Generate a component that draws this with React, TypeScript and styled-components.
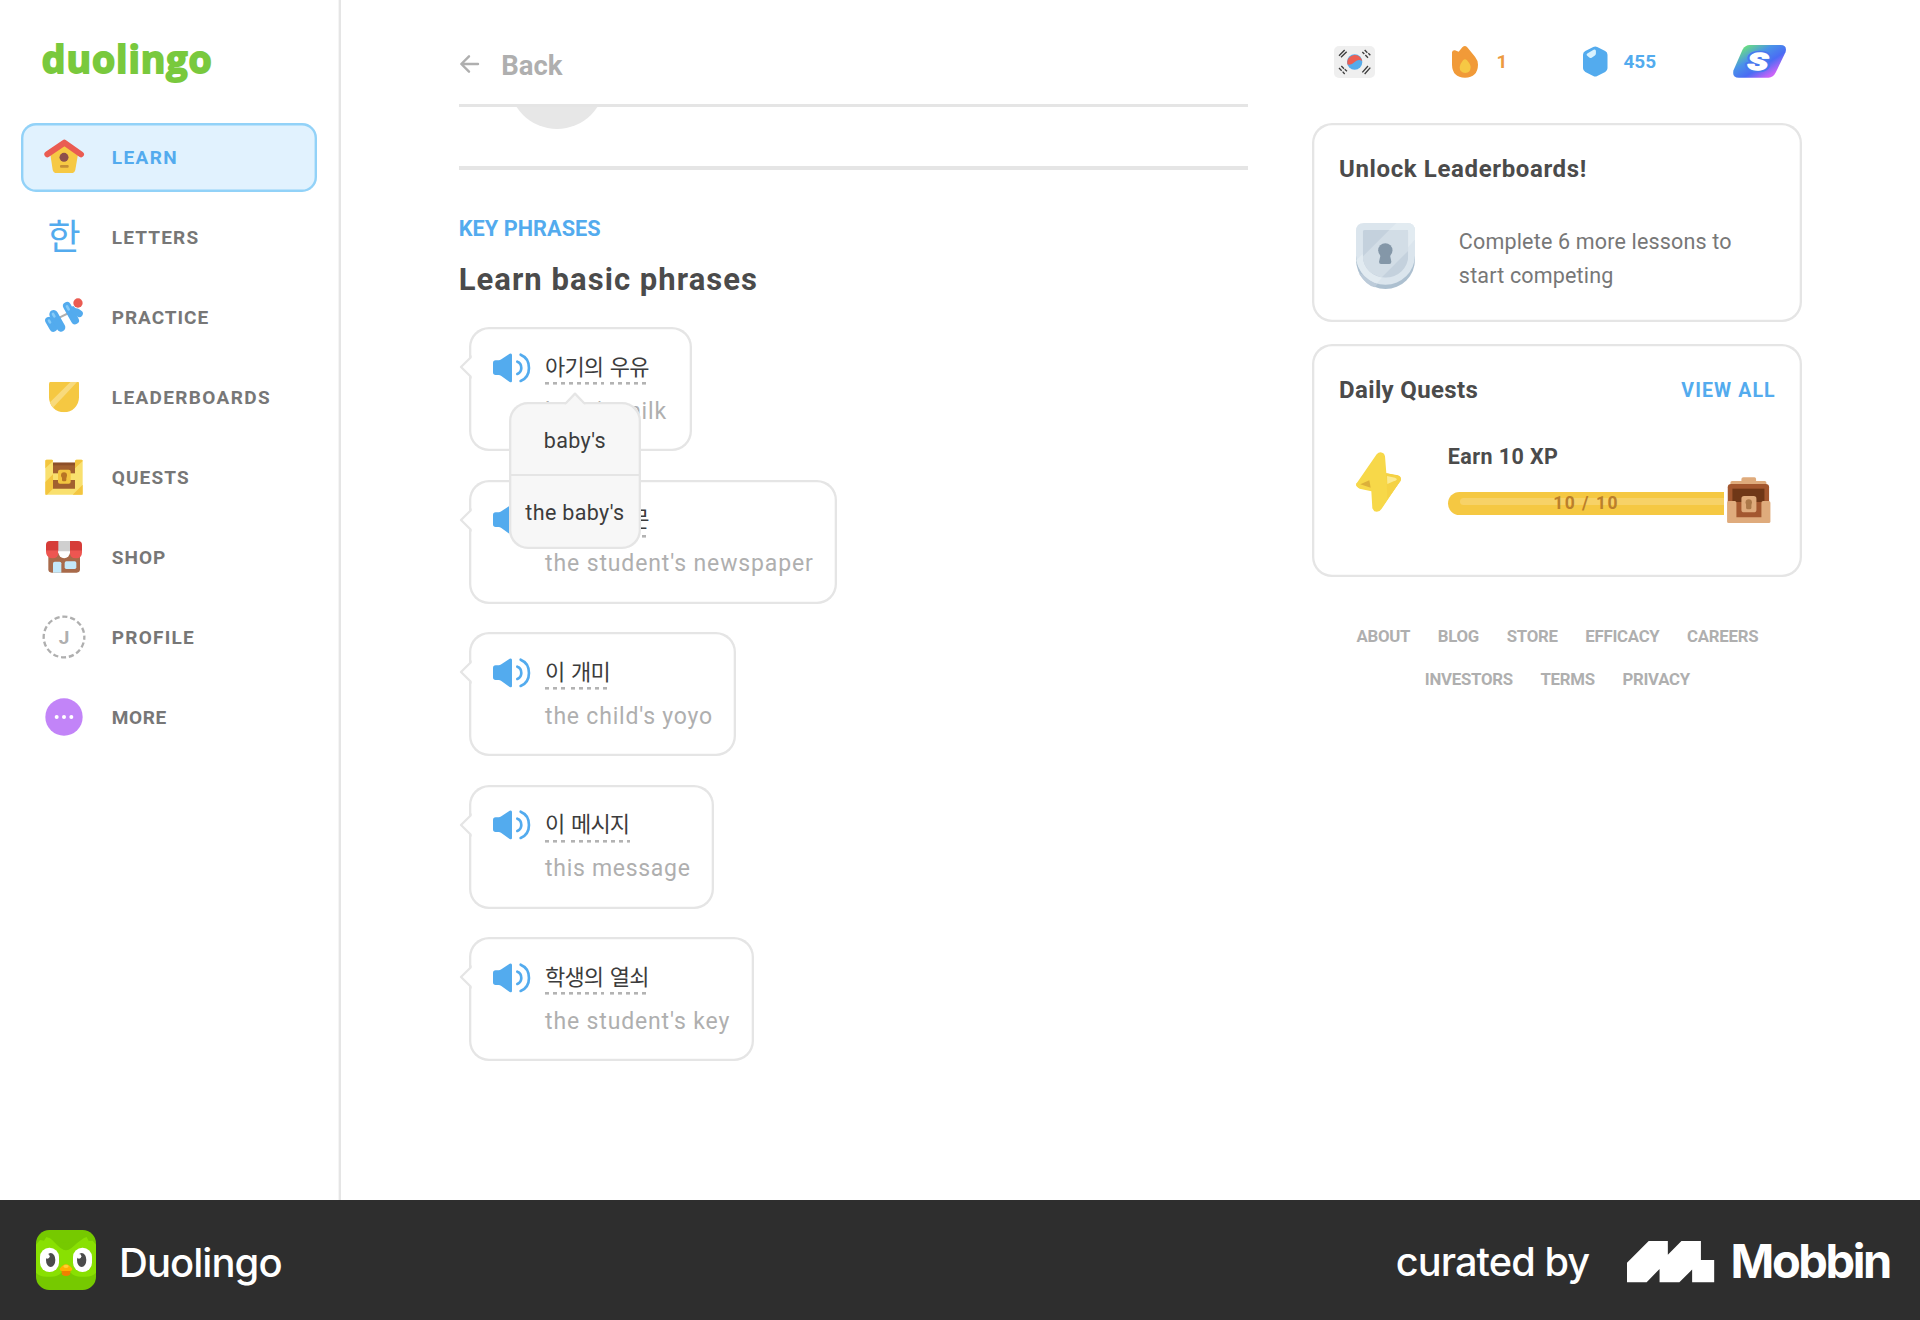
import React from "react";
import styled, { createGlobalStyle } from "styled-components";

const c = {
  blue: "#53abee",
  gray: "#777777",
  light: "#afafaf",
  line: "#e5e5e5",
  dark: "#4b4b4b",
  green: "#79c93d",
};

const Global = createGlobalStyle`
  * { box-sizing: border-box; }
  body { margin: 0; background: #fff; font-family: Roboto, "Noto Sans CJK KR", sans-serif; }
  svg { display: block; flex: none; overflow: visible; }
`;

const Page = styled.div`
  width: 1920px;
  height: 1320px;
  display: flex;
  flex-direction: column;
  overflow: hidden;
`;
const Screen = styled.div`
  height: 1200px;
  display: flex;
`;

/* Sidebar */
const Sidebar = styled.aside`
  width: 341.4px;
  padding: 34px 22px 0 21.3px;
  box-shadow: inset -2.4px 0 0 ${c.line};
`;
const Logo = styled.div`
  height: 88.7px;
  padding-left: 20.5px;
  font: 700 37.5px/50px "Open Sans", sans-serif;
  letter-spacing: 0.9px;
  color: ${c.green};
  -webkit-text-stroke: 1.8px ${c.green};
  stroke-linejoin: round;
  white-space: nowrap;
`;
const Nav = styled.nav`
  display: flex;
  flex-direction: column;
  gap: 10.9px;
`;
const NavItem = styled.a<{ $active?: boolean; $ls: number }>`
  width: 295.7px;
  height: 69.1px;
  padding-left: 20.5px;
  display: flex;
  align-items: center;
  gap: 26px;
  border-radius: 15px;
  background: ${(p) => (p.$active ? "#e1f2fe" : "transparent")};
  box-shadow: ${(p) => (p.$active ? "inset 0 0 0 2.4px #92d2f8" : "none")};
  color: ${(p) => (p.$active ? c.blue : c.gray)};
  font-size: 19px;
  font-weight: 700;
  letter-spacing: ${(p) => p.$ls}px;
`;

/* Lesson column */
const Main = styled.main`
  width: 789px;
  margin-left: 117.3px;
`;
const Back = styled.div`
  height: 104px;
  padding: 26px 0 0 1.5px;
  display: flex;
  align-items: center;
  gap: 22px;
  color: ${c.light};
  font-size: 27.5px;
  font-weight: 700;
`;
const BackArrow = styled.svg`
  margin-bottom: 3px;
`;
const Rule = styled.div<{ $h: number }>`
  height: ${(p) => p.$h}px;
  background: ${c.line};
`;
const Clip = styled.div`
  height: 59.6px;
  padding-left: 50.6px;
  overflow: hidden;
`;
const Disc = styled.div`
  width: 96px;
  height: 96px;
  margin-top: -73.6px;
  border-radius: 50%;
  background: #e7e7e7;
`;
const Eyebrow = styled.div`
  margin-top: 44.8px;
  font-size: 21.7px;
  line-height: 28px;
  font-weight: 700;
  letter-spacing: 0.05px;
  color: ${c.blue};
`;
const Title = styled.h1`
  margin: 17.9px 0 26.9px;
  font-size: 31px;
  line-height: 40px;
  font-weight: 700;
  letter-spacing: 1.05px;
  color: ${c.dark};
`;
const Bubbles = styled.div`
  padding-left: 10.8px;
  display: flex;
  flex-direction: column;
  gap: 28.8px;
`;
const Bubble = styled.div<{ $w: number }>`
  position: relative;
  width: ${(p) => p.$w}px;
  height: 123.7px;
  padding: 24.3px 0 0 24px;
  display: flex;
  align-items: flex-start;
  gap: 14.3px;
  border-radius: 20px;
  box-shadow: inset 0 0 0 2.3px ${c.line};
`;
const Tail = styled.svg`
  position: absolute;
  left: -10.5px;
  top: 28px;
`;
const Words = styled.div`
  display: flex;
  gap: 6px;
  font: 400 22px/26px "Noto Sans CJK KR", sans-serif;
  letter-spacing: -0.85px;
  color: #3c3c3c;
`;
const Word = styled.span<{ $w: number }>`
  width: ${(p) => p.$w}px;
  height: 33.4px;
  white-space: nowrap;
  background: repeating-linear-gradient(90deg, #b3b3b3 0 4px, transparent 4px 8px) left bottom / 100% 2.6px no-repeat;
`;
const Meaning = styled.div<{ $ls: number }>`
  margin-top: 12.9px;
  font-size: 23px;
  line-height: 28px;
  letter-spacing: ${(p) => p.$ls}px;
  color: ${c.light};
  white-space: nowrap;
`;
const Hint = styled.div`
  position: absolute;
  z-index: 2;
  left: 39.8px;
  top: 75px;
  width: 131.3px;
  height: 146.4px;
  display: flex;
  flex-direction: column;
  border-radius: 19px;
  background: #f7f7f7;
  box-shadow: inset 0 0 0 2.3px ${c.line};
`;
const HintArrow = styled.svg`
  position: absolute;
  left: 54.5px;
  top: -10.5px;
`;
const HintRow = styled.div`
  height: 72px;
  padding-top: 4px;
  display: flex;
  align-items: center;
  justify-content: center;
  font-size: 21.5px;
  letter-spacing: 0.35px;
  color: #3c3c3c;
  & + & {
    height: 74.4px;
    padding-top: 0;
    border-top: 2px solid ${c.line};
  }
`;

/* Right column */
const Aside = styled.aside`
  width: 490px;
  margin-left: 64.7px;
`;
const Stats = styled.div`
  height: 122.8px;
  padding: 45px 16px 0 21.5px;
  display: flex;
  justify-content: space-between;
  align-items: flex-start;
`;
const Stat = styled.div<{ $color: string; $gap: number; $w: number }>`
  width: ${(p) => p.$w}px;
  height: 33px;
  display: flex;
  align-items: center;
  gap: ${(p) => p.$gap}px;
  color: ${(p) => p.$color};
  font-size: 19px;
  font-weight: 700;
`;
const Card = styled.section<{ $h: number }>`
  height: ${(p) => p.$h}px;
  margin-bottom: 21.6px;
  padding: 31px 26.7px 0;
  border-radius: 20px;
  box-shadow: inset 0 0 0 2.3px ${c.line};
`;
const CardHead = styled.div`
  display: flex;
  justify-content: space-between;
  align-items: center;
  height: 30px;
`;
const CardTitle = styled.h2<{ $ls: number }>`
  margin: 0;
  font-size: 24px;
  font-weight: 700;
  letter-spacing: ${(p) => p.$ls}px;
  color: ${c.dark};
`;
const ViewAll = styled.a`
  font-size: 19.5px;
  font-weight: 700;
  letter-spacing: 1.1px;
  color: ${c.blue};
`;
const LockRow = styled.div`
  margin-top: 39.5px;
  padding-left: 16.5px;
  display: flex;
  gap: 44.3px;
`;
const LockText = styled.p`
  margin: 2px 0 0;
  font-size: 21.5px;
  line-height: 33.4px;
  letter-spacing: 0.17px;
  color: ${c.gray};
  white-space: nowrap;
`;
const QuestRow = styled.div`
  margin-top: 47.4px;
  padding-left: 16.5px;
  display: flex;
  gap: 47.3px;
`;
const QuestBody = styled.div`
  display: flex;
  flex-direction: column;
`;
const QuestName = styled.div`
  margin-top: -9.8px;
  font-size: 21.5px;
  line-height: 28px;
  font-weight: 700;
  letter-spacing: 0.4px;
  color: ${c.dark};
`;
const Progress = styled.div`
  display: flex;
  align-items: flex-end;
  gap: 2.7px;
  margin-top: 6.3px;
`;
const Bar = styled.div`
  width: 276px;
  height: 23.7px;
  margin-bottom: 7.7px;
  padding: 6.5px 0 0 12px;
  border-radius: 12px 0 0 12px;
  background: #f5c842;
`;
const Shine = styled.div`
  height: 7px;
  display: flex;
  align-items: center;
  justify-content: center;
  padding-right: 11.5px;
  border-radius: 4px 0 0 4px;
  background: #f7d267;
  font-size: 17.5px;
  font-weight: 700;
  line-height: 7px;
  letter-spacing: 1.5px;
  color: #bb7f2a;
`;
const BarText = styled.span`
  padding-top: 4px;
`;
const Links = styled.div`
  margin-top: 48.5px;
  display: flex;
  flex-direction: column;
  gap: 22.7px;
`;
const LinkRow = styled.div`
  display: flex;
  justify-content: center;
  gap: 27.6px;
  font-size: 16.8px;
  line-height: 20px;
  font-weight: 700;
  letter-spacing: -0.25px;
  color: ${c.light};
`;

/* Footer */
const Footer = styled.footer`
  height: 120px;
  padding: 0 26px 0 36px;
  display: flex;
  align-items: center;
  background: #2e2e2e;
  color: #fff;
  font-family: Inter, sans-serif;
`;
const AppName = styled.div`
  margin: 4px auto 0 23px;
  font-size: 40px;
  font-weight: 500;
  letter-spacing: -0.95px;
`;
const Curated = styled.div`
  margin: 3px 37.5px 0 0;
  font-size: 39.7px;
  font-weight: 500;
  letter-spacing: -0.9px;
`;
const MobbinMark = styled.svg`
  margin-top: 4px;
`;
const Mobbin = styled.div`
  width: 163.5px;
  margin: 1px 0 0 16.5px;
  font-size: 47px;
  font-weight: 700;
  letter-spacing: -2.4px;
`;

const NavSvg = ({ cy, children }: { cy: number; children: React.ReactNode }) => (
  <svg width="44" height="44" viewBox={`126 ${cy - 66} 132 132`}>{children}</svg>
);

const House = () => (
  <NavSvg cy={412}>
    <path d="M150 398 L192 372 L235 398 L226 450 Q224 460 214 460 H170 Q160 460 158 450 Z" fill="#f6c944" />
    <path d="M142 404 L193 369 L243 404" fill="none" stroke="#ea5c52" strokeWidth="18" strokeLinecap="round" strokeLinejoin="round" />
    <circle cx="192" cy="413" r="13.5" fill="#8c4f4b" />
    <rect x="180" y="436" width="26" height="8" rx="3" fill="#c58f35" />
  </NavSvg>
);
const Hangul = () => (
  <NavSvg cy={652}>
    <text x="192" y="691" textAnchor="middle" fontFamily="Noto Sans CJK KR" fontSize="108" fontWeight="400" letterSpacing="0" fill={c.blue}>한</text>
  </NavSvg>
);
const Dumbbell = () => (
  <NavSvg cy={892}>
    <path d="M178 894 L206 880" stroke="#afafaf" strokeWidth="6" />
    <g stroke={c.blue} strokeLinecap="round" fill="none">
      <path d="M147 903 L160 925" strokeWidth="23" />
      <path d="M161 884 L183 923" strokeWidth="26" />
      <path d="M201 859 L225 902" strokeWidth="24" />
      <path d="M221 870 L238 882" strokeWidth="21" />
    </g>
    <g stroke="#86cbf8" strokeWidth="8" strokeLinecap="round">
      <path d="M147 903 L150 908" />
      <path d="M159 883 L163 890" />
      <path d="M201 860 L206 869" />
    </g>
    <circle cx="234" cy="850" r="16.5" fill="#fff" />
    <circle cx="234" cy="850" r="14" fill="#ea5c52" />
  </NavSvg>
);
const Shield = () => (
  <NavSvg cy={112}>
    <clipPath id="gold"><path d="M147 72 Q147 66 153 66 H231 Q237 66 237 72 V113 A45 45 0 0 1 147 113 Z" /></clipPath>
    <g clipPath="url(#gold)">
      <rect x="147" y="66" width="90" height="94" fill="#f5c842" />
      <path d="M146 132 L212 66 H237 V72 L162 148 Z" fill="#f8da7c" />
      <path d="M232 66 H237 V78 L166 149 L160 143 Z" fill="#f5c842" />
    </g>
  </NavSvg>
);
const Chest = () => (
  <NavSvg cy={352}>
    <rect x="150" y="309" width="84" height="84" fill="#a2602f" />
    <path d="M159 313 H225" stroke="#8d4f28" strokeWidth="8" />
    <path d="M136 304 Q136 300 140 300 H155 Q159 300 159 304 V387 H225 V304 Q225 300 229 300 H244 Q248 300 248 304 V401 Q248 405 244 405 H140 Q136 405 136 401 Z" fill="#f9e06e" />
    <path d="M140 300 H155 Q159 300 159 304 L136 326 V304 Q136 300 140 300 Z M136 367 L159 344 V387 L141 405 H136 Z M229 300 H244 Q248 300 248 304 L225 326 V304 Z M248 375 V405 H218 Z" fill="#f3c53f" />
    <path d="M159 341 H225 V361 H159 Z" fill="#f9e06e" />
    <rect x="174" y="330" width="38" height="42" rx="6" fill="#f3c53f" />
    <circle cx="192" cy="347" r="9" fill="#b87524" />
    <rect x="186" y="349" width="13" height="16" rx="4" fill="#b87524" />
  </NavSvg>
);
const Shop = () => (
  <NavSvg cy={592}>
    <path d="M145 580 H240 V629 Q240 639 230 639 H155 Q145 639 145 629 Z" fill="#a86a4a" />
    <path d="M138 572 H175 V580 Q175 596 157 596 Q138 594 138 576 Z M210 572 H246 V578 Q246 596 228 596 Q210 596 210 580 Z" fill="#ee5651" />
    <path d="M138 573 V556 Q138 544 150 544 H234 Q246 544 246 556 V573 Z" fill="#d63c38" />
    <rect x="175" y="544" width="35" height="34" fill="#cfcfcf" />
    <path d="M175 575 H210 V578 A17.5 17.5 0 0 1 175 578 Z" fill="#fff" />
    <path d="M159 639 V611 Q159 606 164 606 H179 Q184 606 184 611 V639 Z" fill="#c4e9fa" />
    <rect x="194" y="605" width="35" height="23" rx="5" fill="#c4e9fa" />
  </NavSvg>
);
const Profile = () => (
  <NavSvg cy={832}>
    <circle cx="192" cy="832" r="61" fill="none" stroke="#afafaf" strokeWidth="7" strokeDasharray="15.5 8.46" strokeDashoffset="7" />
    <text x="192" y="852" textAnchor="middle" fontSize="57" fontWeight="700" letterSpacing="0" fill="#afafaf">J</text>
  </NavSvg>
);
const More = () => (
  <NavSvg cy={1072}>
    <circle cx="192" cy="1072" r="56" fill="#c284f8" />
    <g fill="#fff"><circle cx="170" cy="1072" r="6" /><circle cx="192" cy="1072" r="6" /><circle cx="214" cy="1072" r="6" /></g>
  </NavSvg>
);

const SpeakerSvg = styled.svg`
  margin-top: 1px;
`;
const Speaker = () => (
  <SpeakerSvg width="37.3" height="30" viewBox="161 126 112 90">
    <path d="M161 156 Q161 148 169 148 H178 Q182 148 186 145 L211 128 Q218 125 218 132 V210 Q218 216 211 213 L186 195 Q182 192 178 192 H169 Q161 192 161 184 Z" fill={c.blue} />
    <g fill="none" stroke={c.blue} strokeLinecap="round" strokeWidth="8">
      <path d="M234 152 Q246 156 246 171 Q246 184 234 189" />
      <path d="M244 131 Q269 141 269 171 Q269 200 244 210" />
    </g>
  </SpeakerSvg>
);

const Flag = () => (
  <svg width="41" height="32" viewBox="102 76 123 96">
    <rect x="102" y="76" width="123" height="96" rx="15" fill="#efefef" />
    <circle cx="164" cy="124" r="23" fill="#55abea" />
    <path d="M142 131 A23 23 0 1 1 187 121 Q175 114 164 124 Q153 135 142 131 Z" fill="#ec5e52" />
    <g stroke="#3c3c3c" strokeWidth="4">
      <path d="M117 105 L134 88 M123 110 L140 93" />
      <path d="M187 94 L193 100 M196 103 L204 111 M194 88 L202 96 M205 98 L211 104" />
      <path d="M117 142 L125 150 M128 153 L134 160 M124 136 L132 144 M134 146 L141 152" />
      <path d="M187 155 L204 136 M194 160 L211 141" />
    </g>
  </svg>
);
const Flame = () => (
  <svg width="26" height="32" viewBox="456 77 78 96">
    <path d="M456 96 Q457 89 465 90 L476 94 L487 81 Q496 73 503 82 L525 109 Q534 120 534 133 Q533 171 495 172 Q457 171 456 133 Z" fill="#f19a38" />
    <path d="M489 120 Q495 113 501 120 Q512 132 512 141 Q511 158 496 158 Q479 157 479 141 Q480 131 489 120 Z" fill="#f6c844" />
  </svg>
);
const Gem = () => (
  <svg width="24.5" height="31" viewBox="848 77 74 93">
    <path d="M879 80 Q885 77 891 80 L915 92 Q922 96 922 103 V144 Q922 151 915 155 L891 167 Q885 170 879 167 L855 155 Q848 151 848 144 V103 Q848 96 855 92 Z" fill={c.blue} />
    <path d="M861 99 L880 88 Q887 85 887 92 V99 Q887 103 883 106 L874 112 Q870 115 866 111 L860 105 Q857 102 861 99 Z" fill="#d9f2fe" />
  </svg>
);
const Super = () => (
  <svg width="53" height="33" viewBox="1300 75 158 99">
    <defs>
      <linearGradient id="sup" x1="0" y1="0" x2="1" y2="1">
        <stop offset="0.12" stopColor="#6be27c" />
        <stop offset="0.38" stopColor="#4a93e8" />
        <stop offset="0.6" stopColor="#4a6cf4" />
        <stop offset="0.82" stopColor="#c964f8" />
      </linearGradient>
    </defs>
    <path d="M1328 89 Q1336 75 1350 75 H1443 Q1463 76 1457 97 L1428 157 Q1420 173 1406 173 H1317 Q1296 173 1301 151 Z" fill="url(#sup)" />
    <text x="1374" y="150" textAnchor="middle" fontFamily="Roboto" fontSize="74" fontWeight="900" fontStyle="italic" fill="#fff" stroke="#4a78ee" strokeWidth="14" strokeLinejoin="round" paintOrder="stroke" textLength="62" lengthAdjust="spacingAndGlyphs">S</text>
    <text x="1374" y="150" textAnchor="middle" fontFamily="Roboto" fontSize="74" fontWeight="900" fontStyle="italic" fill="#fff" stroke="#fff" strokeWidth="4" strokeLinejoin="round" textLength="62" lengthAdjust="spacingAndGlyphs">S</text>
  </svg>
);
const LockShield = () => (
  <svg width="59" height="66" viewBox="168 611 177 198">
    <clipPath id="outer"><path d="M168 635 Q168 611 192 611 H321 Q345 611 345 635 V708 A88.500 88 0 0 1 168 708 Z" /></clipPath>
    <clipPath id="inner"><path d="M188 638 Q188 632 194 632 H319 Q325 632 325 638 V708 A68.500 67 0 0 1 188 708 Z" /></clipPath>
    <path d="M168 640 H345 V721 A88.500 88 0 0 1 168 721 Z" fill="#adc0d0" />
    <path d="M176 762 Q200 800 224 804 L245 780 Z" fill="#bccbd9" />
    <g clipPath="url(#outer)">
      <rect x="168" y="611" width="177" height="200" fill="#dbe5ed" />
      <path d="M290 611 H345 V660 L220 805 L160 770 V730 Z" fill="#e2ebf1" />
    </g>
    <g clipPath="url(#inner)">
      <rect x="188" y="632" width="137" height="145" fill="#c4d1dd" />
      <path d="M268 632 H325 V694 L244 775 L188 750 V712 Z" fill="#d2dde6" />
    </g>
    <circle cx="256" cy="693" r="21.500" fill="#8497a8" />
    <path d="M243 702 H269 L274 727 Q274 734 268 734 H243 Q237 734 237 727 Z" fill="#8497a8" />
  </svg>
);
const Bolt = () => (
  <svg width="45" height="60" viewBox="167 337 135 180">
    <path d="M250 399 L293 407 Q306 412 300 425 L246 501 Z" fill="#f3cc3c" />
    <path d="M212 452 L178 445 Q164 440 169 430 L214 420 Z" fill="#f3cc3c" />
    <path d="M168 432 L229 344 Q239 332 251 342 L254 350 L258 401 L261 426 L302 420 L244 507 Q236 520 222 515 L216 506 L213 455 L178 447 Q166 442 168 432 Z" fill="#f7d849" />
    <path d="M258 401 L292 408 Q302 412 301 421 L261 478 Z" fill="#f5d244" />
    <path d="M260 409 L284 414 Q293 418 287 422 L261 433 Z" fill="#fbea91" />
    <path d="M180 434 L207 422 L211 444 Z" fill="#dcb03a" />
  </svg>
);
const QuestChest = () => (
  <svg width="43.500" height="46" viewBox="1280 411 130 138">
    <path d="M1290 436 V428 Q1290 423 1295 423 H1323 V417 Q1323 412 1329 412 H1362 Q1367 412 1367 417 V423 H1393 Q1398 423 1398 428 V436 Z" fill="#dfab7c" />
    <path d="M1282 488 V442 Q1282 432 1292 432 H1396 Q1406 432 1406 442 V488 Z" fill="#a3572f" />
    <rect x="1296" y="446" width="96" height="42" fill="#6f3717" />
    <rect x="1304" y="486" width="84" height="48" fill="#a3572f" />
    <path d="M1280 488 Q1280 483 1285 483 H1303 Q1308 483 1308 488 V532 H1383 V488 Q1383 483 1388 483 H1405 Q1410 483 1410 488 V545 Q1410 549 1405 549 H1285 Q1280 549 1280 545 Z" fill="#dfab7c" />
    <rect x="1323" y="468" width="45" height="49" rx="8" fill="#dfab7c" />
    <circle cx="1345" cy="487" r="9.500" fill="#ab7849" />
    <rect x="1337" y="489" width="16" height="19" rx="5" fill="#ab7849" />
  </svg>
);
const Owl = () => (
  <svg width="60" height="60" viewBox="108 120 180 180">
    <defs><clipPath id="owl"><rect x="108" y="120" width="180" height="180" rx="40" /></clipPath></defs>
    <g clipPath="url(#owl)">
      <rect x="108" y="120" width="180" height="180" fill="#76c900" />
      <path d="M108 164 L120 150 L132 152 L139 141 L150 145 L178 168 Q198 190 218 168 L252 144 L260 141 L266 153 L278 152 L288 164 V248 Q276 262 250 260 Q224 262 212 248 H184 Q172 262 146 260 Q120 262 108 248 Z" fill="#89e002" />
      <path d="M160 153 Q184 181 198 181 Q212 181 236 153 L198 158 Z" fill="#76c900" />
      <rect x="120" y="173" width="57" height="73" rx="28" fill="#fff" />
      <rect x="219" y="173" width="57" height="73" rx="28" fill="#fff" />
      <ellipse cx="152" cy="210" rx="14" ry="21" fill="#4b4b4b" />
      <ellipse cx="245" cy="210" rx="14" ry="21" fill="#4b4b4b" />
      <circle cx="142" cy="199" r="7" fill="#fff" />
      <circle cx="237" cy="199" r="7" fill="#fff" />
      <path d="M184 240 H212 L210 254 Q198 262 186 254 Z" fill="#f08000" />
      <path d="M179 236 Q198 209 217 236 Q217 244 208 243 H188 Q179 244 179 236 Z" fill="#ffb100" />
      <ellipse cx="198" cy="229" rx="8" ry="5" fill="#ffd133" />
    </g>
  </svg>
);

const nav = [
  { label: "LEARN", icon: <House />, ls: 1.4, active: true },
  { label: "LETTERS", icon: <Hangul />, ls: 1.15 },
  { label: "PRACTICE", icon: <Dumbbell />, ls: 0.95 },
  { label: "LEADERBOARDS", icon: <Shield />, ls: 1.35 },
  { label: "QUESTS", icon: <Chest />, ls: 1.1 },
  { label: "SHOP", icon: <Shop />, ls: 1 },
  { label: "PROFILE", icon: <Profile />, ls: 1.25 },
  { label: "MORE", icon: <More />, ls: 0.6 },
];

const phrases: { w: number; ls: number; words: [string, number][]; en: string; hint?: string[] }[] = [
  { w: 223, ls: 0.8, words: [["아기의", 58.7], ["우유", 37]], en: "baby's milk", hint: ["baby's", "the baby's"] },
  { w: 368, ls: 0.87, words: [["학생의", 58.7], ["신문", 37]], en: "the student's newspaper" },
  { w: 266.5, ls: 0.8, words: [["이", 20], ["개미", 37]], en: "the child's yoyo" },
  { w: 244.5, ls: 0.7, words: [["이", 20], ["메시지", 58.7]], en: "this message" },
  { w: 284.5, ls: 0.85, words: [["학생의", 58.7], ["열쇠", 37]], en: "the student's key" },
];

export default function App() {
  return (
    <Page>
      <Global />
      <Screen>
        <Sidebar>
          <Logo>duolingo</Logo>
          <Nav>
            {nav.map((n) => (
              <NavItem key={n.label} $active={n.active} $ls={n.ls}>
                {n.icon}
                {n.label}
              </NavItem>
            ))}
          </Nav>
        </Sidebar>
        <Main>
          <Back>
            <BackArrow width="19" height="18" viewBox="0 0 19 18" fill="none" stroke={c.light} strokeWidth="2.4" strokeLinecap="round" strokeLinejoin="round">
              <path d="M18 9H1.500M9 1.300L1.300 9L9 16.700" />
            </BackArrow>
            Back
          </Back>
          <Rule $h={2.6} />
          <Clip><Disc /></Clip>
          <Rule $h={3.6} />
          <Eyebrow>KEY PHRASES</Eyebrow>
          <Title>Learn basic phrases</Title>
          <Bubbles>
            {phrases.map((p) => (
              <Bubble key={p.en} $w={p.w}>
                <Tail width="14" height="24" viewBox="0 0 14 24">
                  <path d="M13 1.300V22.500L10.600 21L1.500 12L10.600 3Z" fill="#fff" />
                  <path d="M11.600 0.500V2.500L2 12L11.600 21.500V23.500" fill="none" stroke={c.line} strokeWidth="2.300" strokeLinejoin="round" />
                </Tail>
                <Speaker />
                <div>
                  <Words>
                    {p.words.map(([t, w]) => <Word key={t} $w={w}>{t}</Word>)}
                  </Words>
                  <Meaning $ls={p.ls}>{p.en}</Meaning>
                </div>
                {p.hint && (
                  <Hint>
                    <HintArrow width="22" height="14" viewBox="0 0 22 14">
                      <path d="M0 13.500L11 2L22 13.500Z" fill="#f7f7f7" />
                      <path d="M0.500 11.600L2 11L11 1.600L20 11L21.500 11.600" fill="none" stroke={c.line} strokeWidth="2.300" strokeLinejoin="round" />
                    </HintArrow>
                    {p.hint.map((h) => <HintRow key={h}>{h}</HintRow>)}
                  </Hint>
                )}
              </Bubble>
            ))}
          </Bubbles>
        </Main>
        <Aside>
          <Stats>
            <Stat $color={c.gray} $gap={0} $w={41}><Flag /></Stat>
            <Stat $color="#ec9a40" $gap={18} $w={53}><Flame />1</Stat>
            <Stat $color={c.blue} $gap={16} $w={73}><Gem />455</Stat>
            <Stat $color={c.gray} $gap={0} $w={53}><Super /></Stat>
          </Stats>
          <Card $h={199.7}>
            <CardHead><CardTitle $ls={0.62}>Unlock Leaderboards!</CardTitle></CardHead>
            <LockRow>
              <LockShield />
              <LockText>Complete 6 more lessons to<br />start competing</LockText>
            </LockRow>
          </Card>
          <Card $h={233.3}>
            <CardHead>
              <CardTitle $ls={0.35}>Daily Quests</CardTitle>
              <ViewAll>VIEW ALL</ViewAll>
            </CardHead>
            <QuestRow>
              <Bolt />
              <QuestBody>
                <QuestName>Earn 10 XP</QuestName>
                <Progress>
                  <Bar><Shine><BarText>10 / 10</BarText></Shine></Bar>
                  <QuestChest />
                </Progress>
              </QuestBody>
            </QuestRow>
          </Card>
          <Links>
            <LinkRow>{["ABOUT", "BLOG", "STORE", "EFFICACY", "CAREERS"].map((l) => <span key={l}>{l}</span>)}</LinkRow>
            <LinkRow>{["INVESTORS", "TERMS", "PRIVACY"].map((l) => <span key={l}>{l}</span>)}</LinkRow>
          </Links>
        </Aside>
      </Screen>
      <Footer>
        <Owl />
        <AppName>Duolingo</AppName>
        <Curated>curated by</Curated>
        <MobbinMark width="87.2" height="41.2" viewBox="717 150 253 119.500">
          <path d="M717 213L780 150H835.500V190L875 150H931.500V205H970V269.500H906V233L869 269.500H811.500V231L774 269.500H717Z" fill="#fff" />
        </MobbinMark>
        <Mobbin>Mobbin</Mobbin>
      </Footer>
    </Page>
  );
}
